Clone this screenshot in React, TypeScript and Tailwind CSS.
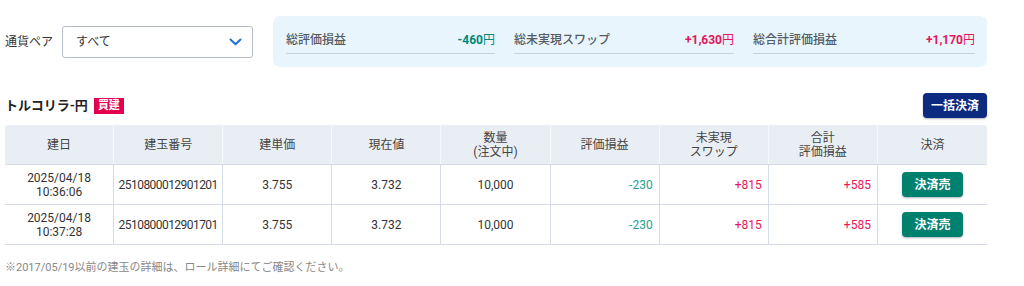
import React from "react";

const font = { fontFamily: "Roboto, 'Noto Sans CJK JP', 'Noto Sans', sans-serif" };

const rows = [
  { date: "2025/04/18", time: "10:36:06", id: "2510800012901201" },
  { date: "2025/04/18", time: "10:37:28", id: "2510800012901701" },
];

function SummaryItem({ label, value, color, w }: { label: string; value: string; color: string; w: string }) {
  return (
    <div className={`${w} flex items-center justify-between border-b border-[#c9d3dd] h-[26px] pb-[2px]`}>
      <span className="text-[12px] font-medium text-[#555b63]">{label}</span>
      <span className={`text-[12px] ${color}`}>
        <span className="font-bold">{value}</span>
        <span>円</span>
      </span>
    </div>
  );
}

export default function App() {
  const cell = "border-r border-[#d6dce6] last:border-r-0";
  return (
    <div className="w-[1024px] h-[286px] bg-white text-[#333]" style={font}>
      <div className="flex items-start pt-4">
        <div className="flex items-center pl-[5px] pt-[10px] w-[273px]">
          <span className="text-[12px] text-[#333] w-[57px]">通貨ペア</span>
          <div className="w-[191px] h-[32px] border border-[#b5bcc6] rounded-[3px] flex items-center justify-between pl-[13px] pr-[10px]">
            <span className="text-[12px] text-[#333]">すべて</span>
            <svg width="13" height="8" viewBox="0 0 13 8" fill="none">
              <path d="M1.5 1.5 L6.5 6.2 L11.5 1.5" stroke="#1f6fd6" strokeWidth="2" strokeLinecap="round" strokeLinejoin="round" />
            </svg>
          </div>
        </div>
        <div className="w-[714px] h-[51px] bg-[#e8f5fc] rounded-[7px] flex items-start pl-[13px] pt-[12px] gap-[19px]">
          <SummaryItem label="総評価損益" value="-460" color="text-[#00897b]" w="w-[209px]" />
          <SummaryItem label="総未実現スワップ" value="+1,630" color="text-[#e5165a]" w="w-[220px]" />
          <SummaryItem label="総合計評価損益" value="+1,170" color="text-[#e5165a]" w="w-[222px]" />
        </div>
      </div>

      <div className="w-[982px] ml-[5px] mt-[26px] flex items-center justify-between">
        <div className="flex items-center gap-[6px]">
          <span className="text-[13px] font-bold text-[#222]">トルコリラ-円</span>
          <span className="bg-[#e4004f] text-white text-[11px] font-bold leading-none px-[4px] h-[16px] flex items-center">買建</span>
        </div>
        <button className="w-[64px] h-[25px] rounded-[4px] bg-[#0b2a80] text-white text-[12px] font-bold shadow-[0_1px_2px_rgba(0,0,0,0.3)]">一括決済</button>
      </div>

      <div className="w-[982px] ml-[5px] mt-[7px] text-[12px]">
        <div className="grid grid-cols-9 h-[40px] bg-[#e9eef5] border-b border-[#d3dae4] rounded-t-[3px] text-[#444]">
          {["建日", "建玉番号", "建単価", "現在値", "数量\n(注文中)", "評価損益", "未実現\nスワップ", "合計\n評価損益", "決済"].map((h) => (
            <div key={h} className="flex items-center justify-center text-center leading-[14px] whitespace-pre-line border-r border-[#f6f8fb] last:border-r-0">
              {h}
            </div>
          ))}
        </div>
        {rows.map((r) => (
          <div key={r.id} className="grid grid-cols-9 h-[40px] border-b border-[#d6dce6]">
            <div className={`${cell} flex flex-col items-center justify-center leading-[14px]`}>
              <span>{r.date}</span>
              <span>{r.time}</span>
            </div>
            <div className={`${cell} flex items-center justify-center tracking-[-0.55px]`}>{r.id}</div>
            <div className={`${cell} flex items-center justify-center`}>3.755</div>
            <div className={`${cell} flex items-center justify-center`}>3.732</div>
            <div className={`${cell} flex items-center justify-center`}>10,000</div>
            <div className={`${cell} flex items-center justify-end pr-[6px] text-[#26a090]`}>-230</div>
            <div className={`${cell} flex items-center justify-end pr-[6px] text-[#e5165a]`}>+815</div>
            <div className={`${cell} flex items-center justify-end pr-[6px] text-[#e5165a]`}>+585</div>
            <div className={`${cell} flex items-center justify-center`}>
              <button className="w-[61px] h-[25px] rounded-[4px] bg-[#00806f] text-white text-[12px] font-bold shadow-[0_1px_2px_rgba(0,0,0,0.3)]">決済売</button>
            </div>
          </div>
        ))}
      </div>

      <div className="ml-[5px] mt-[15px] text-[11px] text-[#888]">※2017/05/19以前の建玉の詳細は、ロール詳細にてご確認ください。</div>
    </div>
  );
}
